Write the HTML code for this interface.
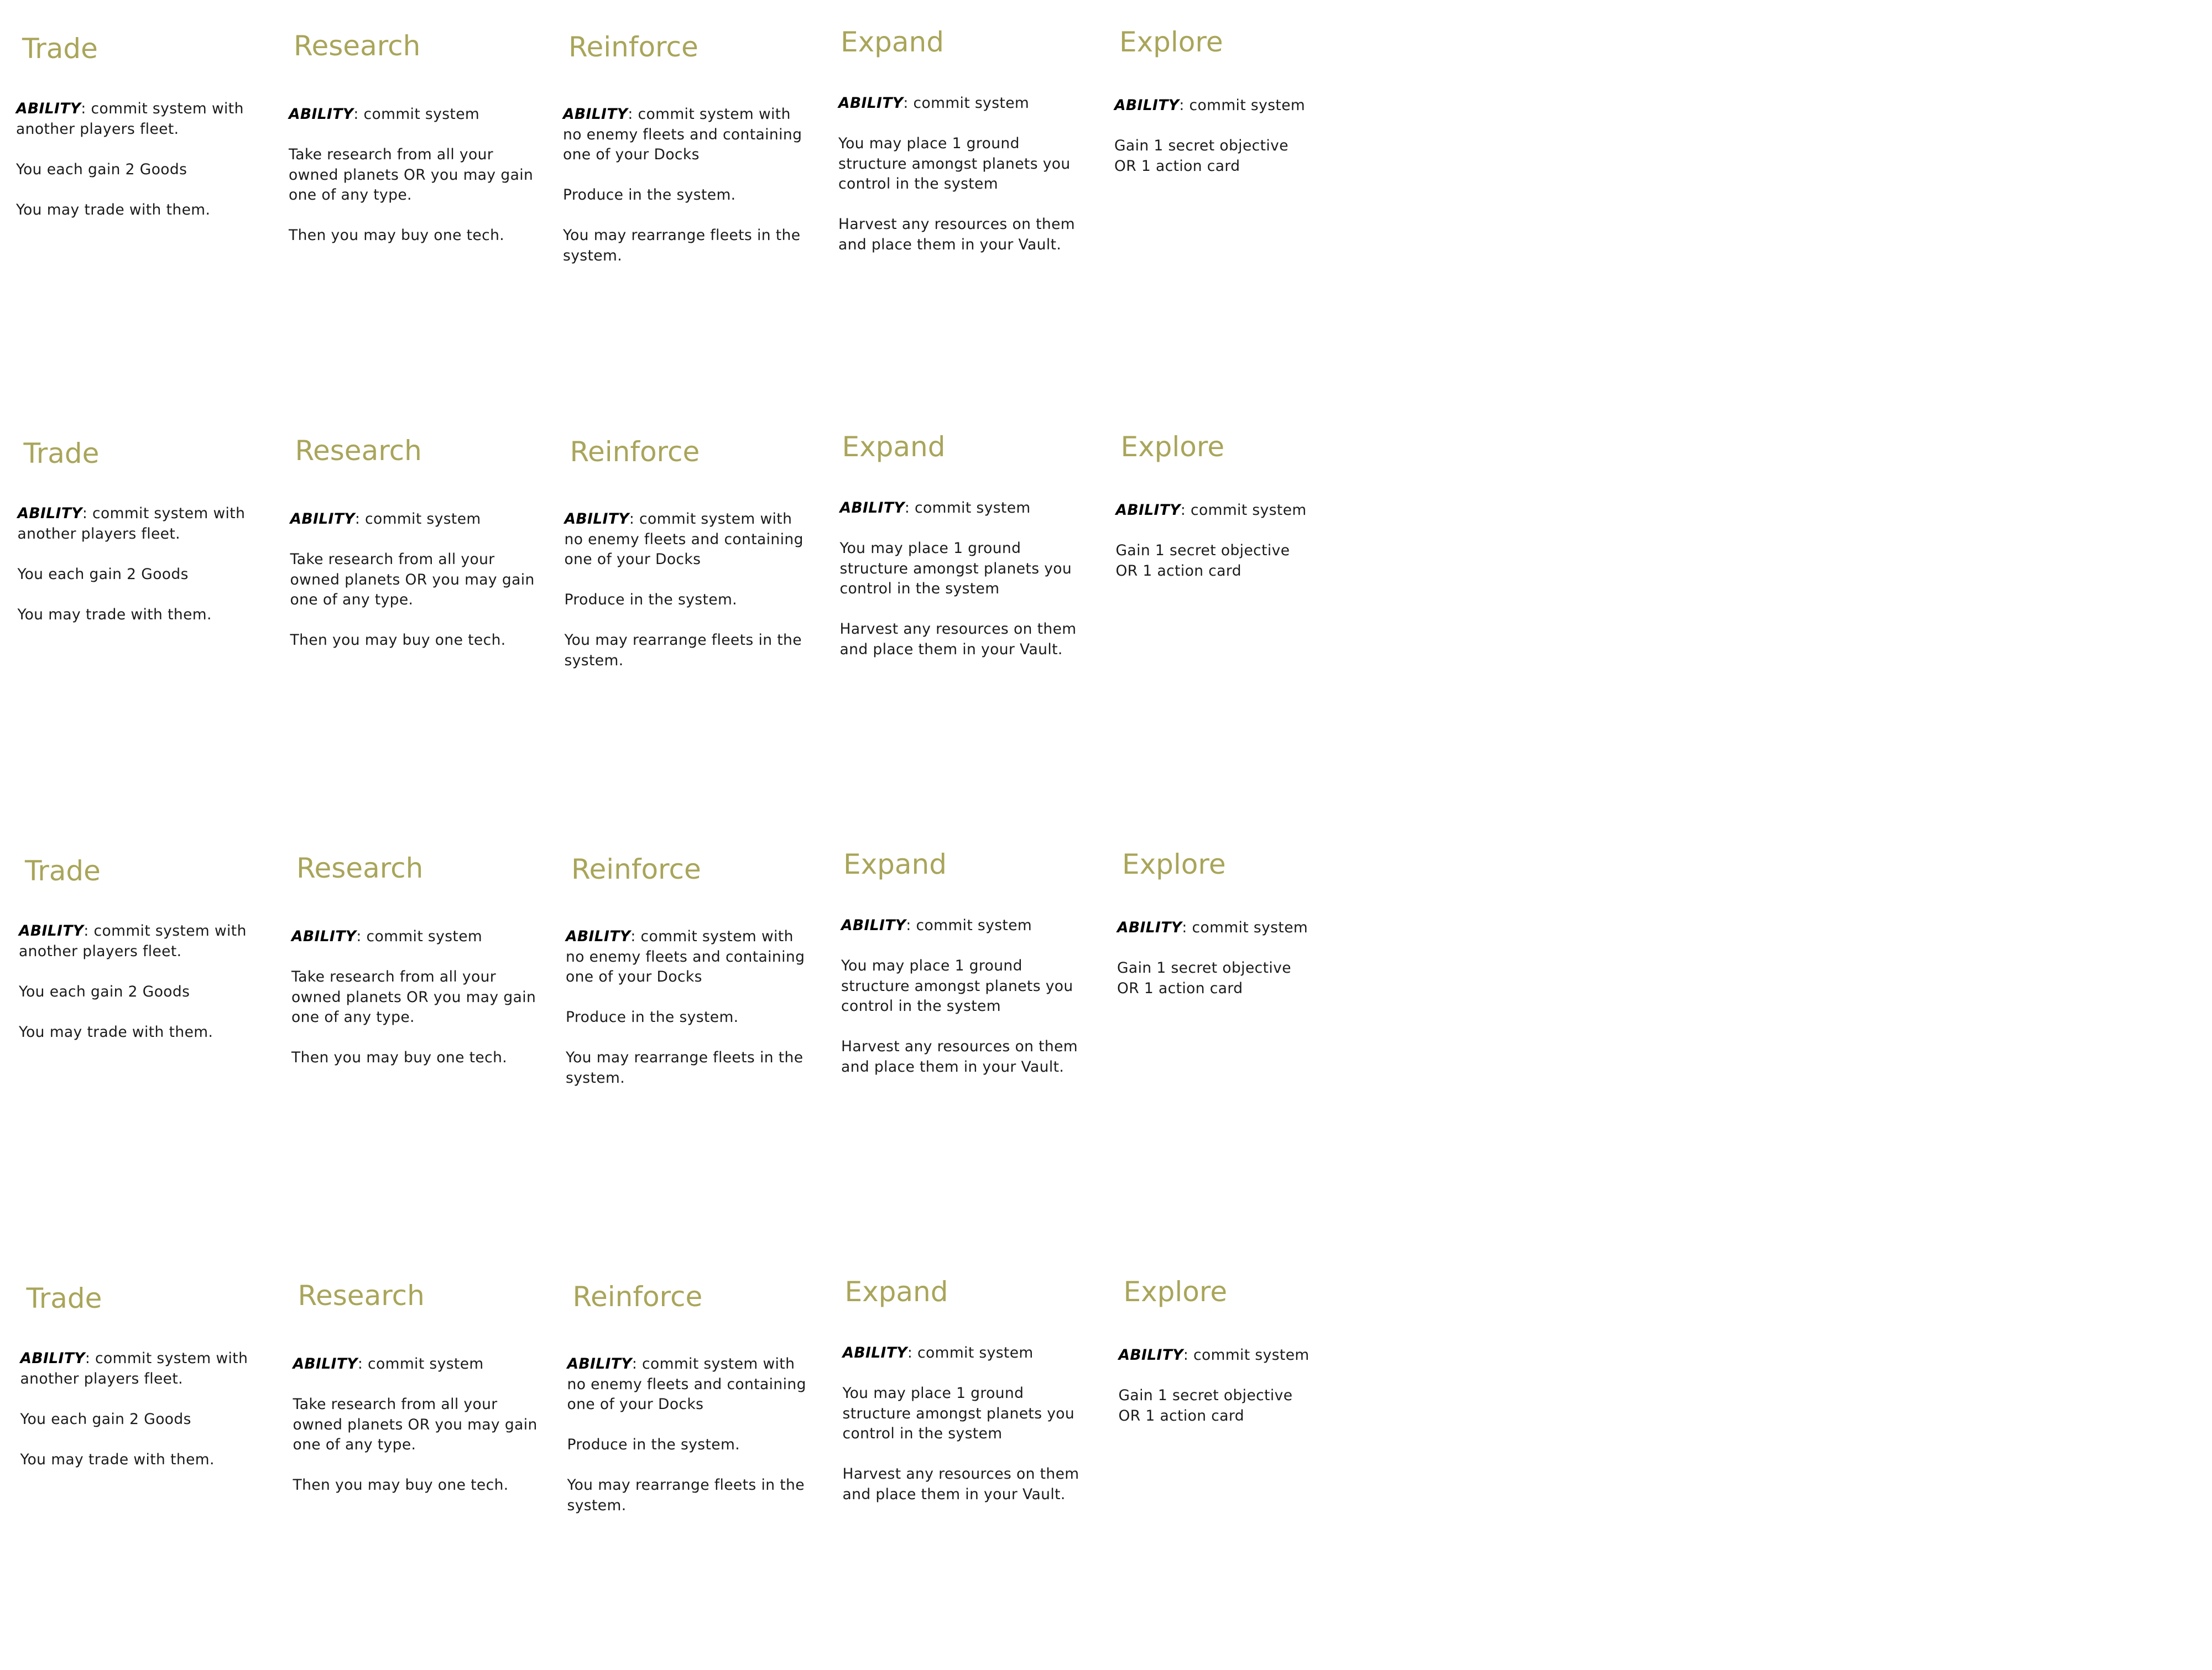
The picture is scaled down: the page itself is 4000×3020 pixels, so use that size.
<!DOCTYPE html>
<html><head><meta charset="utf-8"><style>
html,body{margin:0;padding:0;background:#fff;width:4000px;height:3020px;overflow:hidden;position:relative;font-family:"DejaVu Sans","Liberation Sans",sans-serif}
.t{position:absolute;font-size:50px;line-height:60px;color:#a9a55a;white-space:nowrap}
.b{position:absolute;font-size:26.5px;line-height:36.5px;color:#1a1a1a;white-space:nowrap;letter-spacing:0.4px}
.b b{font-style:italic;font-weight:bold;color:#000}
</style></head><body>
<div id="root"></div>
<script>
var cols=[
 {tx:40,ty:58,bx:29,by:179,title:"Trade",body:"<b>ABILITY</b>: commit system with<br>another players fleet.<br><br>You each gain 2 Goods<br><br>You may trade with them."},
 {tx:531,ty:53,bx:522,by:189,title:"Research",body:"<b>ABILITY</b>: commit system<br><br>Take research from all your<br>owned planets OR you may gain<br>one of any type.<br><br>Then you may buy one tech."},
 {tx:1028,ty:55,bx:1018,by:189,title:"Reinforce",body:"<b>ABILITY</b>: commit system with<br>no enemy fleets and containing<br>one of your Docks<br><br>Produce in the system.<br><br>You may rearrange fleets in the<br>system."},
 {tx:1520,ty:46,bx:1516,by:169,title:"Expand",body:"<b>ABILITY</b>: commit system<br><br>You may place 1 ground<br>structure amongst planets you<br>control in the system<br><br>Harvest any resources on them<br>and place them in your Vault."},
 {tx:2024,ty:46,bx:2015,by:173,title:"Explore",body:"<b>ABILITY</b>: commit system<br><br>Gain 1 secret objective<br>OR 1 action card"}
];
var rows=[[0,0],[2.5,732],[5,1487],[7.5,2260]];
var h="";
rows.forEach(function(r){cols.forEach(function(c){
 h+='<div class="t" style="left:'+(c.tx+r[0])+'px;top:'+(c.ty+r[1])+'px">'+c.title+'</div>';
 h+='<div class="b" style="left:'+(c.bx+r[0])+'px;top:'+(c.by+r[1])+'px">'+c.body+'</div>';
});});
document.getElementById("root").innerHTML=h;
</script>
</body></html>
